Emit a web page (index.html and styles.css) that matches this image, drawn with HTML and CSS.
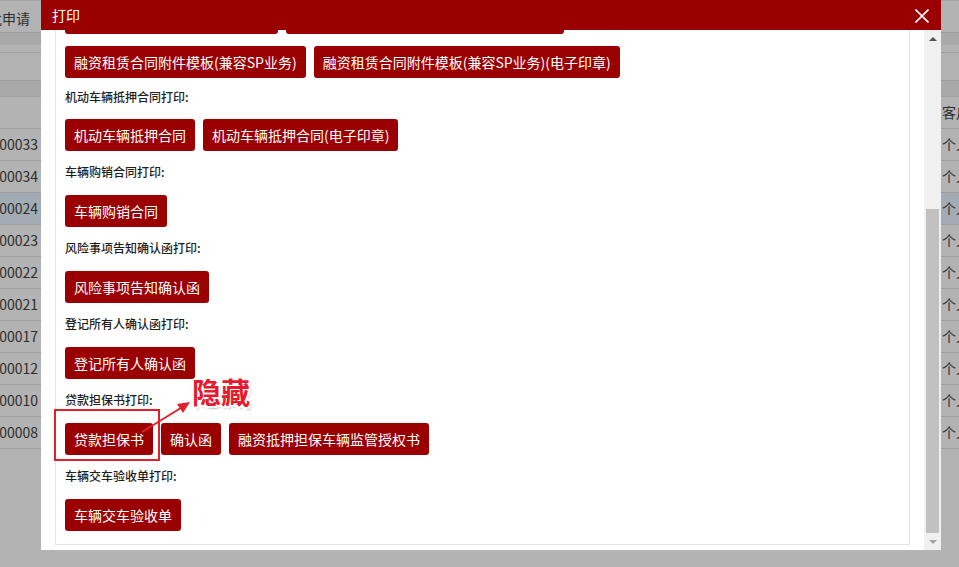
FILE: index.html
```html
<!DOCTYPE html>
<html lang="zh-CN">
<head>
<meta charset="utf-8">
<title>打印</title>
<link rel="stylesheet" href="styles.css">
</head>
<body>
<div class="bg">
  <div class="bg-top"><div class="cell-l cell-top"><span>审批申请</span></div></div>
  <div class="bg-band1"></div>
  <div class="bg-toolbar"></div>
  <div class="bg-band2"></div>
  <div class="bg-row bg-head"><div class="cell-l"></div><div class="cell-r">客户类型</div></div>
  <div class="bg-row"><div class="cell-l"><span>SQ2019000033</span></div><div class="cell-r">个人</div></div>
  <div class="bg-row"><div class="cell-l"><span>SQ2019000034</span></div><div class="cell-r">个人</div></div>
  <div class="bg-row bg-sel"><div class="cell-l"><span>SQ2019000024</span></div><div class="cell-r">个人</div></div>
  <div class="bg-row"><div class="cell-l"><span>SQ2019000023</span></div><div class="cell-r">个人</div></div>
  <div class="bg-row"><div class="cell-l"><span>SQ2019000022</span></div><div class="cell-r">个人</div></div>
  <div class="bg-row"><div class="cell-l"><span>SQ2019000021</span></div><div class="cell-r">个人</div></div>
  <div class="bg-row"><div class="cell-l"><span>SQ2019000017</span></div><div class="cell-r">个人</div></div>
  <div class="bg-row"><div class="cell-l"><span>SQ2019000012</span></div><div class="cell-r">个人</div></div>
  <div class="bg-row"><div class="cell-l"><span>SQ2019000010</span></div><div class="cell-r">个人</div></div>
  <div class="bg-row"><div class="cell-l"><span>SQ2019000008</span></div><div class="cell-r">个人</div></div>
</div>

<div class="dialog">
  <div class="dlg-title">
    <span>打印</span>
    <svg class="dlg-close" width="14" height="14" viewBox="0 0 14 14"><path d="M0.5 0.5 L13.5 13.5 M13.5 0.5 L0.5 13.5" stroke="#fff" stroke-width="1.6" fill="none"/></svg>
  </div>
  <div class="dlg-body">
    <div class="dlg-content">
      <div class="box">
        <div class="sec-label">融资租赁合同打印:</div>
        <div class="btn-group">
          <div class="btn-row">
            <span class="btn">融资租赁合同模板(兼容SP业务)</span>
            <span class="btn">融资租赁合同模板(兼容SP业务)(电子印章)</span>
          </div>
          <div class="btn-row">
            <span class="btn">融资租赁合同附件模板(兼容SP业务)</span>
            <span class="btn">融资租赁合同附件模板(兼容SP业务)(电子印章)</span>
          </div>
        </div>
        <div class="sec-label sec-label-tight">机动车辆抵押合同打印:</div>
        <div class="btn-row">
          <span class="btn">机动车辆抵押合同</span>
          <span class="btn">机动车辆抵押合同(电子印章)</span>
        </div>
        <div class="sec-label">车辆购销合同打印:</div>
        <div class="btn-row">
          <span class="btn">车辆购销合同</span>
        </div>
        <div class="sec-label">风险事项告知确认函打印:</div>
        <div class="btn-row">
          <span class="btn">风险事项告知确认函</span>
        </div>
        <div class="sec-label">登记所有人确认函打印:</div>
        <div class="btn-row">
          <span class="btn">登记所有人确认函</span>
        </div>
        <div class="sec-label">贷款担保书打印:</div>
        <div class="btn-row">
          <span class="btn">贷款担保书</span>
          <span class="btn">确认函</span>
          <span class="btn">融资抵押担保车辆监管授权书</span>
        </div>
        <div class="sec-label">车辆交车验收单打印:</div>
        <div class="btn-row">
          <span class="btn">车辆交车验收单</span>
        </div>
      </div>
    </div>
    <div class="scrollbar">
      <div class="sb-btn"><i class="tri-up"></i></div>
      <div class="sb-track"><div class="sb-thumb"></div></div>
      <div class="sb-btn"><i class="tri-down"></i></div>
    </div>
  </div>
</div>

<div class="mark-box"></div>
<svg class="mark-arrow" width="70" height="50" viewBox="0 0 70 50">
  <path d="M2 38 L44 12" stroke="#e41f2b" stroke-width="2" fill="none"/>
  <path d="M50 8 L37 10 L43 19 Z" fill="#e41f2b"/>
</svg>
<div class="mark-text">隐藏</div>
</body>
</html>
```

FILE: styles.css
```css
html, body {
  margin: 0;
  padding: 0;
}
body {
  width: 959px;
  height: 567px;
  overflow: hidden;
  position: relative;
  background: #b3b3b3;
  font-family: "Noto Sans CJK SC", "Liberation Sans", sans-serif;
  color: #2e2e2e;
}

/* background page under the mask */
.bg {
  display: flex;
  flex-direction: column;
}
.bg-top {
  height: 31px;
  border-top: 1px solid #a4a4a4;
  border-bottom: 1px solid #9d9d9d;
  display: flex;
}
.cell-top {
  width: 30px !important;
  line-height: 34px !important;
}
.bg-band1 {
  height: 19px;
  background: linear-gradient(#a9a9a9 0, #a9a9a9 12px, #b3b3b3 12px);
  border-bottom: 1px solid #9d9d9d;
}
.bg-toolbar {
  height: 27px;
  border-bottom: 1px solid #9d9d9d;
}
.bg-band2 {
  height: 15px;
  background: #a9a9a9;
  border-bottom: 1px solid #a1a1a1;
}
.bg-row {
  height: 31px;
  border-bottom: 1px solid #9d9d9d;
  display: flex;
  justify-content: space-between;
  font-size: 14px;
  line-height: 30px;
}
.bg-sel {
  background: #a3acb5;
}
.cell-l {
  width: 38px;
  display: flex;
  justify-content: flex-end;
  overflow: hidden;
  white-space: nowrap;
  font-size: 14px;
  line-height: 30px;
}
.cell-r {
  width: 17px;
  overflow: hidden;
  white-space: nowrap;
  font-size: 14px;
}

/* dialog */
.dialog {
  position: absolute;
  left: 41px;
  top: 0;
  width: 900px;
  height: 550px;
  background: #fff;
  display: flex;
  flex-direction: column;
}
.dlg-title {
  height: 30px;
  flex: none;
  background: #9b0000;
  color: #fff;
  font-size: 14px;
  line-height: 30px;
  padding: 0 12px 0 11px;
  display: flex;
  justify-content: space-between;
  align-items: center;
}
.dlg-close {
  display: block;
  margin-top: 1px;
}
.dlg-body {
  flex: 1;
  display: flex;
  min-height: 0;
}
.dlg-content {
  flex: 1;
  overflow: hidden;
  background: #fff;
}
.box {
  margin: -73px 14px 5px 14px;
  border: 1px solid #e4e4e4;
  padding: 0 9px 13px;
}
.sec-label {
  font-size: 12px;
  line-height: 20px;
  margin: 11px 0 13px;
  color: #1e1e1e;
  font-weight: 500;
}
.sec-label-tight {
  margin: 9px 0 12px;
}
.btn-group {
  display: flex;
  flex-direction: column;
  gap: 12px;
}
.btn-row {
  display: flex;
  gap: 8px;
}
.btn {
  display: block;
  height: 32px;
  line-height: 32px;
  padding: 0 9px;
  background: #9b0000;
  color: #fff;
  font-size: 14px;
  border-radius: 3px;
  white-space: nowrap;
}

/* fake scrollbar */
.scrollbar {
  width: 17px;
  flex: none;
  background: #f0f0f0;
  display: flex;
  flex-direction: column;
}
.sb-btn {
  height: 17px;
  flex: none;
  display: flex;
  align-items: center;
  justify-content: center;
}
.tri-up {
  width: 0;
  height: 0;
  border-left: 4px solid transparent;
  border-right: 4px solid transparent;
  border-bottom: 4px solid #505050;
}
.tri-down {
  width: 0;
  height: 0;
  border-left: 4px solid transparent;
  border-right: 4px solid transparent;
  border-top: 4px solid #a3a3a3;
}
.sb-track {
  flex: 1;
  display: flex;
  flex-direction: column;
  justify-content: flex-end;
}
.sb-thumb {
  height: 324px;
  margin: 0 2px;
  background: #c1c1c1;
}

/* annotation overlay */
.mark-box {
  position: absolute;
  left: 54px;
  top: 409px;
  width: 102px;
  height: 48px;
  border: 2px solid #e41f2b;
}
.mark-arrow {
  position: absolute;
  left: 140px;
  top: 394px;
}
.mark-text {
  position: absolute;
  left: 192px;
  top: 372px;
  font-size: 29px;
  line-height: 38px;
  font-weight: 700;
  color: #e8192c;
  text-shadow:
    2px 0 0 #fff, -2px 0 0 #fff, 0 2px 0 #fff, 0 -2px 0 #fff,
    1.5px 1.5px 0 #fff, -1.5px -1.5px 0 #fff, 1.5px -1.5px 0 #fff, -1.5px 1.5px 0 #fff,
    2px 3px 2px rgba(0,0,0,0.25);
}
```
